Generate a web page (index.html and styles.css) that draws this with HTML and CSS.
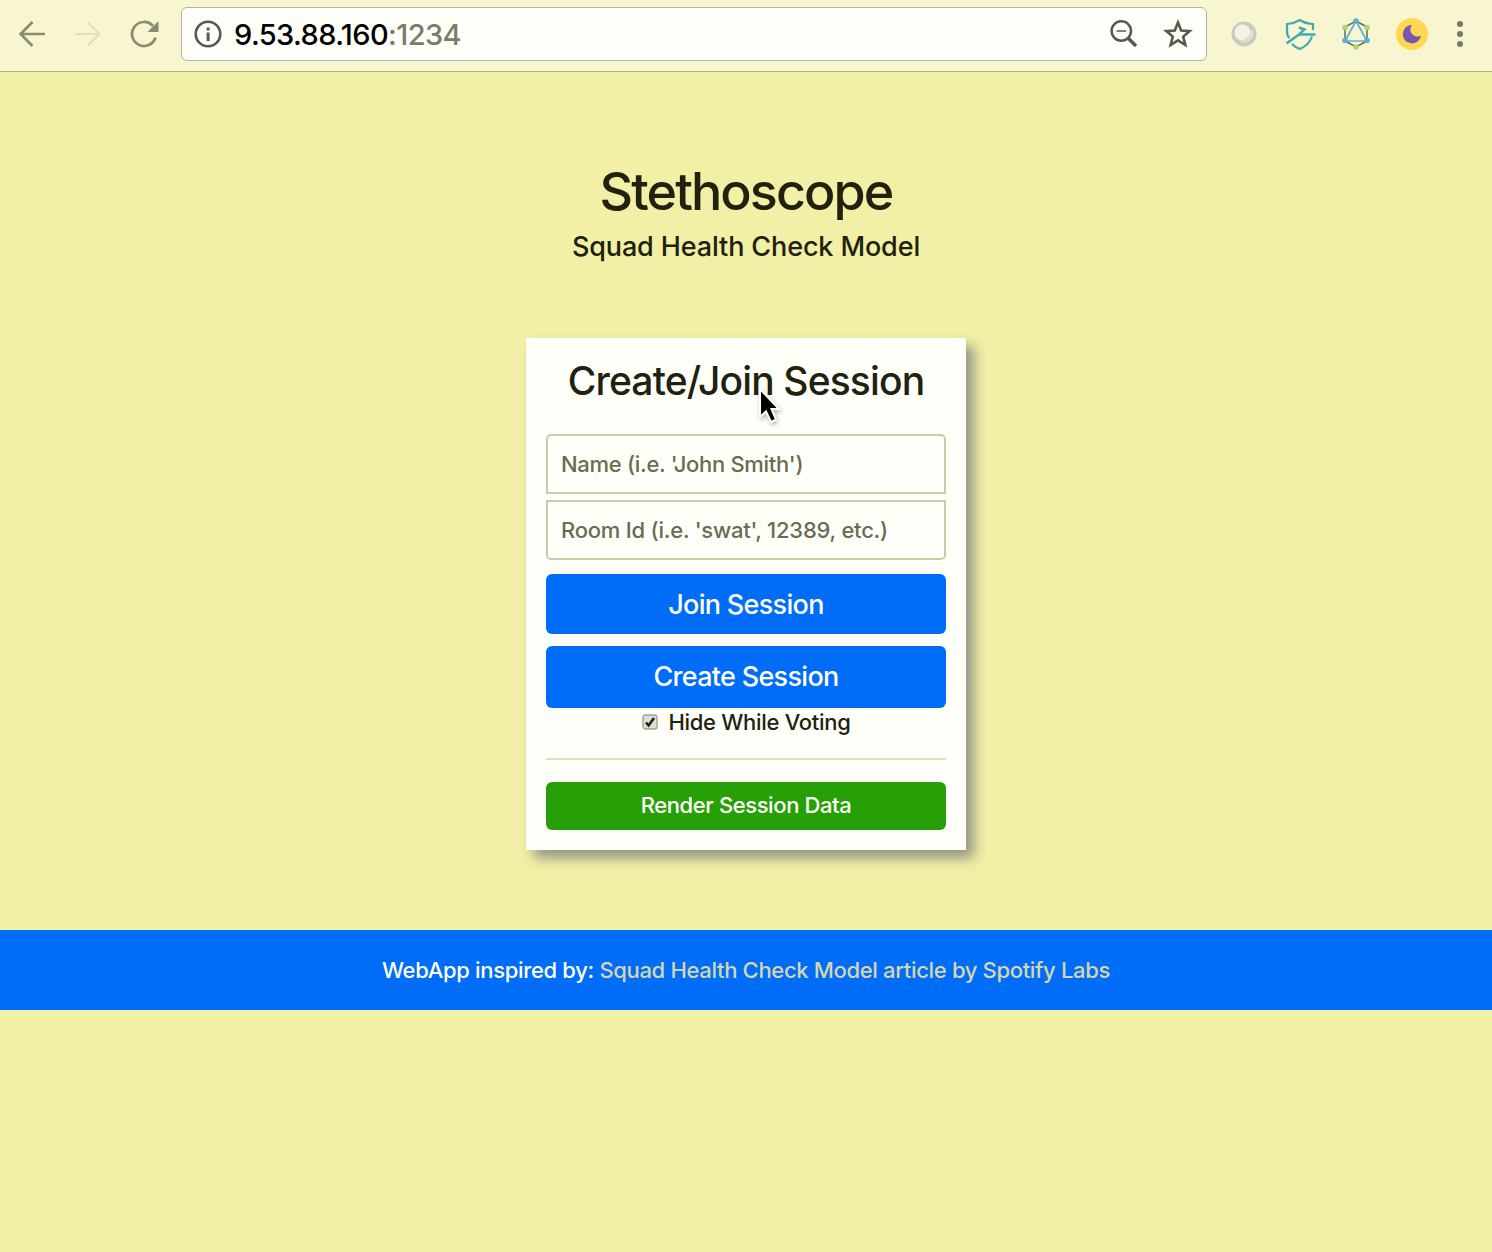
FILE: index.html
```html
<!DOCTYPE html>
<html lang="en">
<head>
<meta charset="utf-8">
<title>Stethoscope</title>
<link rel="stylesheet" href="styles.css">
</head>
<body>
<header class="toolbar">
  <svg class="icon" width="28" height="28" viewBox="0 0 28 28" fill="none" stroke="#8b8a74" stroke-width="2.6"><path d="M27 14H3M14.5 2L2.5 14l12 12"/></svg>
  <svg class="icon fwd" width="28" height="28" viewBox="0 0 28 28" fill="none" stroke="#e2e0c2" stroke-width="2.2"><path d="M1 14h24M13.500 2l12 12-12 12"/></svg>
  <svg class="icon reload" width="30" height="28" viewBox="0 0 30 28" fill="none" stroke="#8b8a74" stroke-width="2.700"><path d="M25.500 17.500A12 12 0 1 1 23 6"/><path d="M28.500 1v11H17.500z" fill="#8b8a74" stroke="none"/></svg>
  <div class="address">
    <svg class="info" width="28" height="28" viewBox="0 0 28 28"><circle cx="14" cy="14" r="12.300" fill="none" stroke="#57584e" stroke-width="2.600"/><path d="M12.600 7.500h3v3h-3zM12.600 12.500h3v8.500h-3z" fill="#57584e"/></svg>
    <span class="url"><span class="host">9.53.88.160</span>:1234</span>
    <svg class="lens" width="28" height="28" viewBox="0 0 28 28" fill="none" stroke="#57584e"><circle cx="11.300" cy="11" r="9.700" stroke-width="2.500"/><path d="M6.500 11h9.500" stroke-width="1.500"/><path d="M18 18l8 8" stroke-width="3.600"/></svg>
    <svg class="star" width="30" height="29" viewBox="0 0 30 29" fill="none" stroke="#57584e" stroke-width="2.600"><path d="M15 3.500l3.200 8 8.500.6-6.500 5.500 2.100 8.400-7.300-4.600L7.700 26l2.100-8.400-6.500-5.500 8.500-.6z"/></svg>
  </div>
  <svg class="ext" width="28" height="28" viewBox="0 0 28 28"><circle cx="14" cy="14" r="12.500" fill="#cac9bd"/><circle cx="12.500" cy="12.500" r="8" fill="#f5f4e2"/><path d="M22 9a9 9 0 0 1-13 12q10-2 13-12z" fill="#dfded0"/></svg>
  <svg class="ext e2" width="32" height="32" viewBox="0 0 32 32" fill="none" stroke="#42a9b0" stroke-width="2.200"><path d="M29 12V6q-8-.5-13-4Q10 5.500 3 6v8q0 4 2.500 6M8 26q3 3.500 8 5 9-4 12-12.500"/><path d="M2.500 25.500L15 16.500h16.500M14.500 17l6-5.500L15 9.500" stroke-width="2.400"/></svg>
  <svg class="ext e3" width="30" height="32" viewBox="0 0 30 32"><path d="M15 3L26 9v14l-11 6-11-6V9z" fill="none" stroke="#666a5b" stroke-width="1.500"/><path d="M15 3L4 23h22z" fill="none" stroke="#61afd5" stroke-width="1.700"/><g fill="#61afd5"><circle cx="15" cy="3" r="2.800"/><circle cx="4" cy="22.500" r="2.800"/><circle cx="26" cy="22.500" r="2.800"/></g><g fill="#a7d96f"><circle cx="4" cy="9.500" r="2.800"/><circle cx="26" cy="9.500" r="2.800"/><circle cx="15" cy="29" r="2.800"/></g></svg>
  <svg class="ext e4" width="32" height="32" viewBox="0 0 32 32"><circle cx="16" cy="16" r="16" fill="#ffd750"/><path d="M16 7a9.200 9.200 0 1 0 9 10.500A7 7 0 0 1 16 7z" fill="#7b56ae"/></svg>
  <svg class="more" width="8" height="28" viewBox="0 0 8 28" fill="#77776a"><circle cx="4" cy="4" r="3"/><circle cx="4" cy="14" r="3"/><circle cx="4" cy="24" r="3"/></svg>
</header>
<main class="page">
  <h1 class="title">Stethoscope</h1>
  <h2 class="subtitle">Squad Health Check Model</h2>
  <section class="card">
    <h3 class="card-title">Create/Join Session</h3>
    <div class="field first">Name (i.e. 'John Smith')</div>
    <div class="field last">Room Id (i.e. 'swat', 12389, etc.)</div>
    <button class="btn join">Join Session</button>
    <button class="btn create">Create Session</button>
    <label class="check"><svg width="16" height="16" viewBox="0 0 16 16"><rect x="1" y="1" width="14" height="14" rx="2.500" fill="#dedecf" stroke="#a3a294" stroke-width="1.400"/><path d="M4 8.500l2.600 3L12 4" fill="none" stroke="#222" stroke-width="2.600"/></svg><span>Hide While Voting</span></label>
    <hr class="rule">
    <button class="btn render">Render Session Data</button>
  </section>
</main>
<footer class="footer"><p class="credit">WebApp inspired by: <a>Squad Health Check Model article by Spotify Labs</a></p></footer>
<svg class="cursor" width="28" height="42" viewBox="0 0 28 42"><path d="M3 2v28l6-5.500 5 10.500 5-2.300L14.500 22H22z" fill="#000" stroke="#fff" stroke-width="2"/></svg>
</body>
</html>
```
FILE: styles.css
```css
* { box-sizing: border-box; }
body { margin: 0; min-height: 1252px; background: #f1f0a6; color: #20210f; font-family: Inter, "Liberation Sans", sans-serif; }
.toolbar { display: flex; align-items: center; height: 72px; padding: 0 28px 4px 18px; background: #f7f6d0; border-bottom: 1px solid #adac96; }
.toolbar svg { flex: none; display: block; }
.fwd { margin-left: 28px; }
.reload { margin-left: 28px; }
.address { display: flex; align-items: center; width: 1026px; height: 54px; margin-left: 21px; padding: 0 13px 0 12px; background: #fffffa; border: 1px solid #b3b2a5; border-radius: 6px; }
.url { margin-left: 12px; padding-top: 2px; font-size: 29px; font-weight: 450; letter-spacing: -0.6px; color: #7c7b69; }
.host { color: #000; }
.lens { margin-left: auto; }
.star { margin-left: 25px; }
.ext { margin-left: 23px; }
.e2 { margin-left: 26px; }
.e3 { margin-left: 25px; }
.e4 { margin-left: 25px; }
.more { margin-left: 28px; }
.page { display: flex; flex-direction: column; align-items: center; height: 858px; padding-top: 88px; }
h1, h2, h3, p { margin: 0; font-weight: 500; white-space: nowrap; }
.title { font-size: 52px; line-height: 64px; letter-spacing: -1.9px; }
.subtitle { margin-top: 6px; font-size: 27px; line-height: 34px; letter-spacing: -0.12px; }
.card { display: flex; flex-direction: column; width: 440px; height: 512px; margin-top: 74px; padding: 19px 20px 20px; background: #fffffa; box-shadow: 8px 8px 12px #949488; }
.card-title { font-size: 39px; line-height: 48px; letter-spacing: -0.85px; text-align: center; }
.field { height: 60px; padding: 0 13px; border: 2px solid #cbcaa9; font-size: 22px; font-weight: 450; letter-spacing: -0.3px; line-height: 57px; color: #6a6b51; white-space: nowrap; }
.first { margin-top: 29px; border-radius: 5px 5px 0 0; }
.last { margin-top: 6px; border-radius: 0 0 5px 5px; letter-spacing: -0.23px; }
.btn { display: block; width: 100%; padding: 0; border: 0; border-radius: 6px; background: #006df8; color: #fffffa; font-family: inherit; font-size: 27px; font-weight: 500; letter-spacing: -0.7px; white-space: nowrap; }
.join { height: 60px; margin-top: 14px; }
.create { height: 62px; margin-top: 12px; padding-bottom: 2px; }
.check { display: flex; align-items: center; justify-content: center; gap: 11px; height: 28px; font-size: 22px; font-weight: 450; letter-spacing: -0.3px; }
.rule { width: 100%; height: 2px; margin: 22px 0; border: 0; background: #dfdfc0; }
.render { height: 48px; padding-bottom: 3px; background: #27a007; font-size: 22px; letter-spacing: -0.4px; }
.footer { display: flex; align-items: center; justify-content: center; height: 80px; background: #006df8; color: #fffffa; font-size: 22px; letter-spacing: -0.33px; }
.footer a { color: #d5d6ad; }
.cursor { position: absolute; left: 757px; top: 387px; filter: drop-shadow(1px 2px 2px rgba(70, 70, 20, .4)); }
```
